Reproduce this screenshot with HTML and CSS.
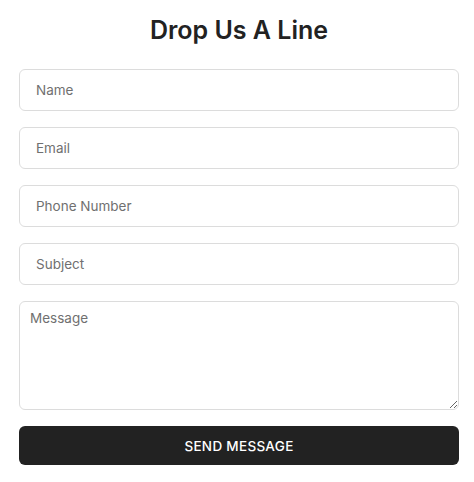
FILE: index.html
```html
<!DOCTYPE html>
<html>
<head>
<meta charset="utf-8">
<link rel="stylesheet" href="styles.css">
</head>
<body>
<div class="wrap">
  <h2 class="title">Drop Us A Line</h2>
  <form class="form">
    <input class="field" type="text" placeholder="Name">
    <input class="field" type="email" placeholder="Email">
    <input class="field" type="text" placeholder="Phone Number">
    <input class="field" type="text" placeholder="Subject">
    <textarea class="field area" placeholder="Message"></textarea>
    <button class="btn" type="button">SEND MESSAGE</button>
  </form>
</div>
</body>
</html>
```
FILE: styles.css
```css
* { box-sizing: border-box; }
body {
  margin: 0;
  background: #fff;
  font-family: Inter, "Open Sans", sans-serif;
}
.wrap {
  width: 440px;
  margin-left: 19px;
  padding-top: 14px;
}
.title {
  margin: 0 0 23px;
  text-align: center;
  font-size: 25px;
  line-height: 32px;
  font-weight: 600;
  color: #222;
}
.form {
  display: flex;
  flex-direction: column;
  gap: 16px;
}
.field {
  display: block;
  width: 440px;
  height: 42px;
  border: 1px solid #dcdcdc;
  border-radius: 6px;
  padding: 0 16px;
  font-family: inherit;
  font-size: 13.5px;
  color: #333;
  outline: none;
  background: #fff;
}
.field::placeholder { color: #707070; }
.area {
  height: 109px;
  padding: 8px 10px;
  resize: vertical;
}
.btn {
  height: 39px;
  border: 0;
  border-radius: 6px;
  background: #222;
  color: #fff;
  font-family: inherit;
  font-size: 13.5px;
  font-weight: 500;
  letter-spacing: 0.3px;
}
```
